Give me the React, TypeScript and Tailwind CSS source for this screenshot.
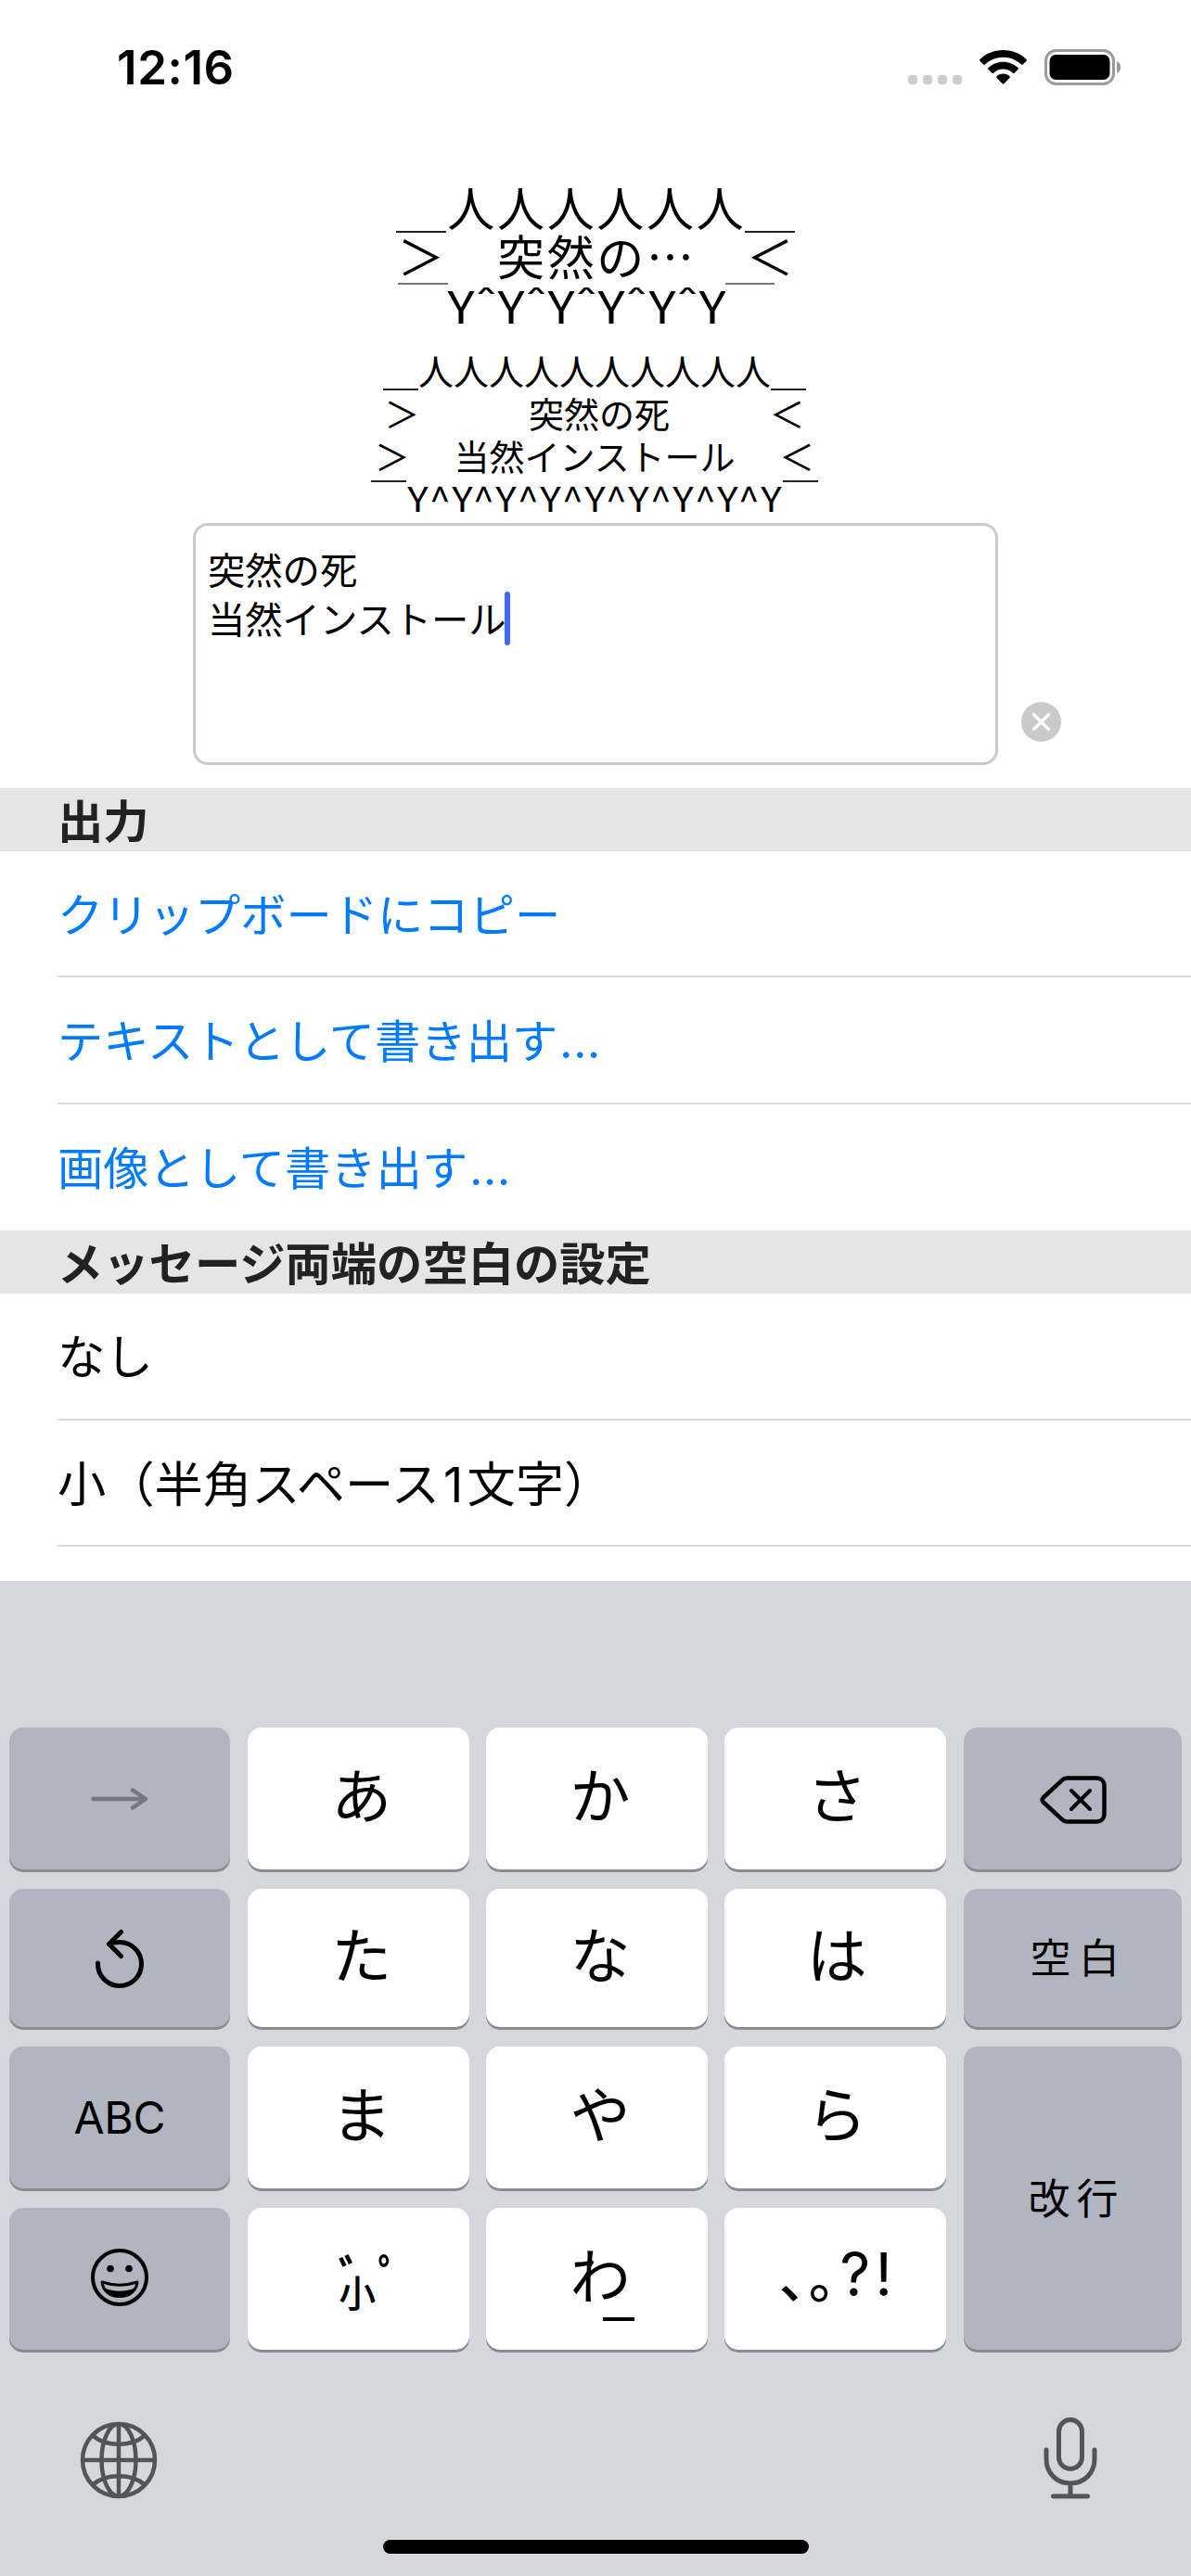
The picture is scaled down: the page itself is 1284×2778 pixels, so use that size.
import type { ReactNode } from "react";

const outputRows = [
  { label: "クリップボードにコピー", dots: false, row: "h-[136px] border-b-2 border-[#dedede]" },
  { label: "テキストとして書き出す", dots: true, row: "h-[137px] border-b-2 border-[#dedede]" },
  { label: "画像として書き出す", dots: true, row: "h-[136px]" },
];

function StatusBar() {
  return (
    <header className="flex h-[147px] items-start justify-between pl-[126px] pr-[76px] pt-[47px]">
      <span className="font-[Inter] text-[51px] leading-[52px] font-semibold tracking-[0.6px]">12:16</span>

      <div className="flex items-start pt-[6px]">
        {/* No signal dots */}
        <div className="mt-[28px] flex gap-[6px]">
          <i className="size-[10px] rounded-[4px] bg-[#cbcbcb]" />
          <i className="size-[10px] rounded-[4px] bg-[#cbcbcb]" />
          <i className="size-[10px] rounded-[4px] bg-[#cbcbcb]" />
          <i className="size-[10px] rounded-[4px] bg-[#cbcbcb]" />
        </div>
        <svg className="ml-[19px] mt-[1px] h-[37px] w-[51px]" viewBox="0 0 51 37">
          <path d="M25.5 0C35.3 0 44.2 3.8 50.6 10c.5.5.5 1.200 0 1.700l-3.900 3.900c-.5.5-1.200.5-1.700 0C39.900 10.700 33 7.800 25.500 7.800S11.100 10.700 6 15.600c-.5.5-1.200.5-1.700 0L.4 11.700c-.5-.5-.5-1.200 0-1.700C6.800 3.800 15.700 0 25.500 0z" />
          <path d="M25.500 12.800c6.200 0 11.800 2.400 16 6.300.5.5.5 1.200 0 1.700l-3.900 3.900c-.5.5-1.200.5-1.700 0-2.700-2.500-6.400-4.100-10.400-4.100s-7.700 1.600-10.400 4.100c-.5.5-1.200.5-1.700 0l-3.900-3.900c-.5-.5-.5-1.200 0-1.700 4.200-3.900 9.800-6.300 16-6.300z" />
          <path d="M25.500 25.600c2.700 0 5.100 1 7 2.700.5.5.5 1.100 0 1.600l-6.200 6.300c-.4.5-1.200.5-1.600 0l-6.200-6.300c-.5-.5-.5-1.100 0-1.600 1.900-1.700 4.300-2.700 7-2.700z" />
        </svg>
        <svg className="ml-[19px] h-[39px] w-[82px]" viewBox="0 0 82 39">
          <rect x="1.500" y="1.500" width="73" height="36" rx="11" fill="none" stroke="#9b9b9b" strokeWidth="3" />
          <rect x="5.500" y="6" width="65" height="27" rx="7" />
          <path d="M78 13c2.700 1.200 4.200 3.600 4.200 6.500S80.700 24.800 78 26z" fill="#9b9b9b" />
        </svg>
      </div>
    </header>
  );
}

// Large balloon: every cell is one full-width character
function BigCell({ children }: { children?: ReactNode }) {
  return <span className="w-[53.7px] text-center">{children}</span>;
}

function BigBalloon() {
  return (
    <div className="flex h-[202px] flex-col items-center pt-[49px] text-[51px]">
      <div className="flex h-[53px] leading-[52px]">
        <i className="mt-[53px] h-[2px] w-[53.7px] bg-[#222]" />
        {Array.from({ length: 6 }, (_, i) => (
          <BigCell key={i}>人</BigCell>
        ))}
        <i className="mt-[53px] h-[2px] w-[53.7px] bg-[#222]" />
      </div>
      <div className="flex h-[53px] leading-[53px]">
        <BigCell>＞</BigCell>
        <BigCell />
        <BigCell>突</BigCell>
        <BigCell>然</BigCell>
        <BigCell>の</BigCell>
        <BigCell>…</BigCell>
        <BigCell />
        <BigCell>＜</BigCell>
      </div>
      <div className="mr-[20px] flex h-[53px] leading-[53px]">
        <i className="mt-[3px] h-[2px] w-[54px] bg-[#777]" />
        {"Y^Y^Y^Y^Y^Y".split("").map((c, i) =>
          c === "Y" ? (
            <span key={i} className="w-[28px] scale-x-[1.14] text-center text-[48px]">Y</span>
          ) : (
            <span key={i} className="mt-[6px] h-[20px] w-[26.2px] scale-x-[1.2] scale-y-[0.6] text-center font-[Inter] text-[38px] leading-[20px] font-medium">^</span>
          )
        )}
        <i className="mt-[3px] h-[2px] w-[53.5px] bg-[#777]" />
      </div>
    </div>
  );
}

function SmallBalloon() {
  return (
    <div className="flex h-[215px] flex-col items-center pr-[2px] pt-[27px] text-[38px] leading-[45px]">
      <div className="flex h-[46px]">
        <i className="mt-[43px] h-[2px] w-[38px] bg-[#222]" />
        <span>人人人人人人人人人人</span>
        <i className="mt-[43px] h-[2px] w-[38px] bg-[#222]" />
      </div>
      <div className="flex h-[46px] w-[453px] justify-between">
        <span>＞</span>
        <span className="ml-[10px]">突然の死</span>
        <span>＜</span>
      </div>
      <div className="flex h-[46px] w-[474px] justify-between">
        <span>＞</span>
        <span>当然インストール</span>
        <span>＜</span>
      </div>
      <div className="flex h-[46px]">
        <i className="mt-[4px] h-[2px] w-[38px] bg-[#222]" />
        {"Y^Y^Y^Y^Y^Y^Y^Y^Y".split("").map((c, i) => (
          <span
            key={i}
            className={
              c === "Y"
                ? "w-[24.8px] scale-x-[1.14] text-center text-[37px]"
                : "w-[22.9px] scale-x-[1.1] text-center"
            }
          >
            {c}
          </span>
        ))}
        <i className="mt-[4px] h-[2px] w-[38px] bg-[#222]" />
      </div>
    </div>
  );
}

function Editor() {
  return (
    <div className="flex h-[286px] items-start pl-[208px]">
      <div className="h-[261px] w-[868px] rounded-[16px] border-[3px] border-[#cacaca] pl-[13px] pt-[19px] text-[40.3px] leading-[53px]">
        <p>突然の死</p>
        <p className="flex">
          当然インストール
          <i className="-ml-[2px] -mt-px h-[58px] w-[6px] rounded-full bg-[#4169f0]" />
        </p>
      </div>
      <svg className="ml-[25px] mt-[193px] size-[43px]" viewBox="0 0 43 43">
        <circle cx="21.500" cy="21.500" r="21.500" fill="#cacaca" />
        <path d="M13.500 13.500l16 16M29.500 13.500l-16 16" stroke="#fff" strokeWidth="3.500" strokeLinecap="round" />
      </svg>
    </div>
  );
}

function SectionTitle({ children }: { children: ReactNode }) {
  return (
    <h2 className="h-[68px] bg-[#e5e5e5] pl-[62px] text-[49.3px] leading-[66px] font-bold text-[#222]">{children}</h2>
  );
}

function Key({ children, gray, className = "" }: { children: ReactNode; gray?: boolean; className?: string }) {
  return (
    <button
      className={`flex items-center justify-center rounded-[15px] text-[65px] leading-none shadow-[0_3px_0_#8b8c91] ${
        gray ? "bg-[#b1b5c0]" : "bg-white"
      } ${className}`}
    >
      {children}
    </button>
  );
}

function Kana({ children, last }: { children: string; last?: boolean }) {
  return <span className={last ? "-mt-[13px] ml-[3px]" : "-mt-[13px] ml-[7px]"}>{children}</span>;
}

function Keyboard() {
  return (
    <section className="h-[1073px] bg-[#d6d7dc] pl-[9.5px] pt-[158px]">
      <div className="grid grid-cols-[238.8px_238.8px_238.8px_238.8px_235.8px] grid-rows-[153px_149px_153px_153px] gap-x-[18.5px] gap-y-[21px]">
        <Key gray>
          <svg className="h-[24px] w-[62px]" viewBox="0 0 62 24" fill="none" stroke="#73777f" strokeWidth="4.500" strokeLinecap="round" strokeLinejoin="round">
            <path d="M2.500 12h56M45 2.500L59 12 45 21.500" />
          </svg>
        </Key>
        <Key><Kana>あ</Kana></Key>
        <Key><Kana>か</Kana></Key>
        <Key><Kana last>さ</Kana></Key>
        <Key gray>
          <svg className="mt-[2px] h-[52px] w-[72px]" viewBox="0 0 72 52" fill="none" stroke="#000" strokeWidth="4.500" strokeLinecap="round" strokeLinejoin="round">
            <path d="M29 2.500h32c5 0 8.500 3.500 8.500 8.500v30c0 5-3.500 8.500-8.500 8.500H29c-2 0-3.500-.8-5-2.300L3.800 28.500c-1.600-1.700-1.600-3.300 0-5L24 4.800c1.500-1.500 3-2.300 5-2.300z" />
            <path d="M34 16l20 20M54 16L34 36" strokeWidth="4" />
          </svg>
        </Key>

        <Key gray>
          <svg className="h-[64px] w-[54px]" viewBox="0 0 54 64" fill="none" stroke="#000" strokeWidth="5" strokeLinecap="round" strokeLinejoin="round">
            <path d="M3.500 37A23.500 23.500 0 1 0 27 14.500c-4 0-7.500.3-11 2" />
            <path d="M28.500 3.500L15.500 16.500l13 13" />
          </svg>
        </Key>
        <Key><Kana>た</Kana></Key>
        <Key><Kana>な</Kana></Key>
        <Key><Kana last>は</Kana></Key>
        <Key gray><span className="-mt-[5px] ml-[13px] text-[44px] tracking-[8.5px]">空白</span></Key>

        <Key gray><span className="font-[Inter] text-[48px] tracking-[-0.3px]">ABC</span></Key>
        <Key><Kana>ま</Kana></Key>
        <Key><Kana>や</Kana></Key>
        <Key><Kana last>ら</Kana></Key>
        <Key gray className="row-span-2"><span className="-mt-[5px] ml-[8px] text-[45px] tracking-[7px]">改行</span></Key>

        <Key gray>
          <svg className="-mt-[4px] size-[62px]" viewBox="0 0 62 62">
            <circle cx="31" cy="31" r="29" fill="none" stroke="#000" strokeWidth="4" />
            <circle cx="21" cy="21.500" r="3.800" />
            <circle cx="41" cy="21.500" r="3.800" />
            <path d="M12 36c12 4 26 4 38 0-1 10-9 15.500-19 15.500S13 46 12 36z" fill="none" stroke="#000" strokeWidth="3" strokeLinejoin="round" />
            <path d="M14 42c10 5 24 5 34 0-3 7-9 10-17 10s-14-3-17-10z" />
          </svg>
        </Key>
        <Key>
          <span className="mt-[4px] ml-[26px] flex w-[70px] flex-col font-bold">
            <span className="flex h-[23px] justify-between text-[54px] leading-[54px]">
              <span className="w-[27px]">ﾞ</span>
              <span className="w-[27px]">ﾟ</span>
            </span>
            <span className="ml-px self-start text-[40px] leading-[40px] font-medium">小</span>
          </span>
        </Key>
        <Key>
          <span className="relative -mt-[12px] ml-[7px]">
            わ<i className="absolute right-[-4px] bottom-[-19px] h-[4px] w-[34px] bg-black" />
          </span>
        </Key>
        <Key>
          <span className="-mt-[9px] ml-[2px] flex text-[58px] leading-[60px]">
            <span className="w-[32px] font-medium">､</span>
            <span className="w-[30px] font-medium">｡</span>
            <span className="w-[40px] text-center font-[Inter] text-[64px]">?</span>
            <span className="w-[22px] text-center font-[Inter] text-[64px]">!</span>
          </span>
        </Key>
      </div>

      <div className="mt-[73px] flex items-start justify-between pl-[76.5px] pr-[101px]">
        <svg className="mt-[4px] size-[84px]" viewBox="0 0 84 84" fill="none" stroke="#50555b" strokeWidth="4.500">
          <circle cx="42" cy="42" r="39" />
          <ellipse cx="42" cy="42" rx="18.500" ry="39" />
          <path d="M42 3v78M3 42h78M14 15.500c14 12.500 42 12.500 56 0M14 68.500c14-12.500 42-12.500 56 0" />
        </svg>
        <svg className="h-[88px] w-[58px]" viewBox="0 0 58 88" fill="none" stroke="#50555b" strokeWidth="5" strokeLinecap="round">
          <rect x="16.500" y="2.500" width="25" height="53" rx="12.500" />
          <path d="M3 35v10c0 15 11 26 26 26s26-11 26-26V35M29 71v13M10.500 85h37" />
        </svg>
      </div>
      <div className="ml-[403.500px] mt-[44px] h-[15px] w-[459px] rounded-full bg-black" />
    </section>
  );
}

export default function App() {
  return (
    <main className="h-[2778px] w-[1284px] overflow-hidden bg-white font-['Noto_Sans_CJK_JP',sans-serif] text-black">
      <StatusBar />
      <BigBalloon />
      <SmallBalloon />
      <Editor />

      <SectionTitle>出力</SectionTitle>
      <ul className="pl-[62px] text-[49.3px] leading-[131px] text-[#007aff]">
        {outputRows.map(({ label, dots, row }) => (
          <li key={label} className={row}>
            {label}
            {dots && <span className="ml-[2px] font-[Inter] tracking-[0.7px]">...</span>}
          </li>
        ))}
      </ul>

      <SectionTitle>メッセージ両端の空白の設定</SectionTitle>
      <ul className="h-[310px] pl-[62px] text-[52.3px] leading-[130px]">
        <li className="h-[137px] border-b-2 border-[#dedede] text-[51.500px]">なし</li>
        <li className="h-[136px] border-b-2 border-[#dedede]">
          小（半角スペース<span className="pl-[4px] pr-[4px] font-[Inter]">1</span>文字）
        </li>
      </ul>

      <Keyboard />
    </main>
  );
}
